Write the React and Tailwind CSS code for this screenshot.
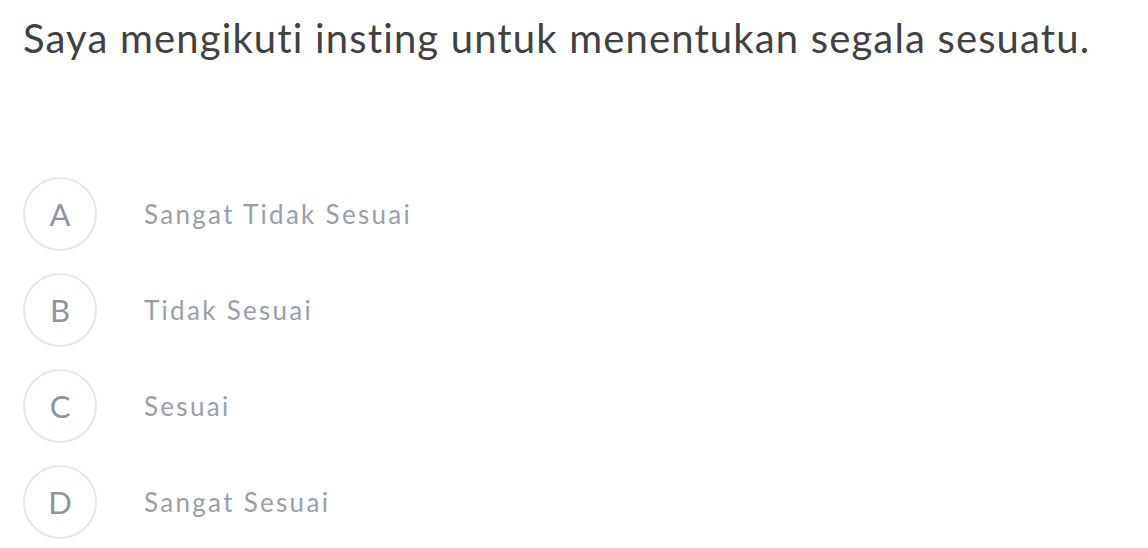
const options = [
  { key: 'A', label: 'Sangat Tidak Sesuai' },
  { key: 'B', label: 'Tidak Sesuai' },
  { key: 'C', label: 'Sesuai' },
  { key: 'D', label: 'Sangat Sesuai' },
];

export default function App() {
  return (
    <div
      className="min-h-screen bg-white px-[23px] pt-[10px] [font-variant-ligatures:none]"
      style={{ fontFamily: 'Lato, "Open Sans", sans-serif' }}
    >
      <h1 className="text-[40px] leading-[56px] tracking-[1.15px] text-[#414141]">
        Saya mengikuti insting untuk menentukan segala sesuatu.
      </h1>

      <div className="mt-[111px] flex flex-col gap-[22px]">
        {options.map((o) => (
          <button key={o.key} className="flex items-center text-left">
            <span className="flex h-[74px] w-[74px] shrink-0 items-center justify-center rounded-full border-2 border-[#e3e7ee] text-[31px] text-[#8e93a0]">
              {o.key}
            </span>
            <span className="ml-[47px] text-[26px] tracking-[2.3px] text-[#9a9ea9]">{o.label}</span>
          </button>
        ))}
      </div>
    </div>
  );
}
